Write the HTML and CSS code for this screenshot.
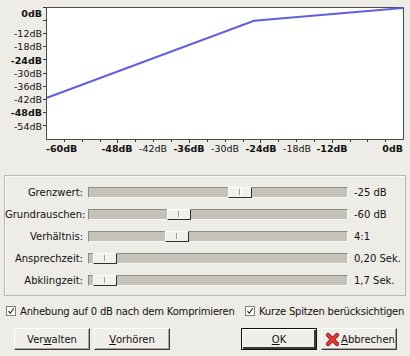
FILE: index.html
```html
<!DOCTYPE html>
<html lang="de">
<head>
    <meta charset="UTF-8">
    <title>Kompressor</title>
    <link rel="stylesheet" href="styles.css">
</head>
<body>
    <div class="dialog">
        <!-- Transfer curve -->
        <div class="graph">
            <svg width="410" height="168" viewBox="0 0 410 168">
                <rect x="46.5" y="7.5" width="357" height="132" fill="#ffffff" stroke="#4a4a4a"/>
                <g stroke="#3a3a3a" stroke-width="1">
                    <line x1="43" y1="7.5" x2="46" y2="7.5"/>
                    <line x1="43" y1="20.5" x2="46" y2="20.5"/>
                    <line x1="43" y1="33.5" x2="46" y2="33.5"/>
                    <line x1="43" y1="46.5" x2="46" y2="46.5"/>
                    <line x1="43" y1="59.5" x2="46" y2="59.5"/>
                    <line x1="43" y1="73.5" x2="46" y2="73.5"/>
                    <line x1="43" y1="86.5" x2="46" y2="86.5"/>
                    <line x1="43" y1="99.5" x2="46" y2="99.5"/>
                    <line x1="43" y1="112.5" x2="46" y2="112.5"/>
                    <line x1="43" y1="125.5" x2="46" y2="125.5"/>
                    <line x1="64.5" y1="140" x2="64.5" y2="142"/>
                    <line x1="82.5" y1="140" x2="82.5" y2="142"/>
                    <line x1="100.5" y1="140" x2="100.5" y2="142"/>
                    <line x1="117.5" y1="140" x2="117.5" y2="143"/>
                    <line x1="135.5" y1="140" x2="135.5" y2="142"/>
                    <line x1="153.5" y1="140" x2="153.5" y2="142"/>
                    <line x1="171.5" y1="140" x2="171.5" y2="142"/>
                    <line x1="189.5" y1="140" x2="189.5" y2="143"/>
                    <line x1="207.5" y1="140" x2="207.5" y2="142"/>
                    <line x1="225.5" y1="140" x2="225.5" y2="142"/>
                    <line x1="243.5" y1="140" x2="243.5" y2="142"/>
                    <line x1="260.5" y1="140" x2="260.5" y2="143"/>
                    <line x1="278.5" y1="140" x2="278.5" y2="142"/>
                    <line x1="296.5" y1="140" x2="296.5" y2="142"/>
                    <line x1="314.5" y1="140" x2="314.5" y2="142"/>
                    <line x1="332.5" y1="140" x2="332.5" y2="143"/>
                    <line x1="350.5" y1="140" x2="350.5" y2="142"/>
                    <line x1="367.5" y1="140" x2="367.5" y2="142"/>
                    <line x1="385.5" y1="140" x2="385.5" y2="142"/>
                </g>
                <polyline points="47,97.8 254,20.8 403,8" fill="none" stroke="#5f5fe0" stroke-width="2"/>

                <g class="axis-y">
                    <text x="42" y="16.5" class="major">0dB</text>
                    <text x="42" y="37">-12dB</text>
                    <text x="42" y="50">-18dB</text>
                    <text x="42" y="63.5" class="major">-24dB</text>
                    <text x="42" y="76.5">-30dB</text>
                    <text x="42" y="89.5">-36dB</text>
                    <text x="42" y="103">-42dB</text>
                    <text x="42" y="116" class="major">-48dB</text>
                    <text x="42" y="129.5">-54dB</text>
                </g>
                <g class="axis-x">
                    <text x="46" y="152" class="major start">-60dB</text>
                    <text x="117" y="152" class="major">-48dB</text>
                    <text x="153" y="152">-42dB</text>
                    <text x="189" y="152" class="major">-36dB</text>
                    <text x="225" y="152">-30dB</text>
                    <text x="261" y="152" class="major">-24dB</text>
                    <text x="297" y="152">-18dB</text>
                    <text x="332" y="152" class="major">-12dB</text>
                    <text x="403" y="152" class="major end">0dB</text>
                </g>
            </svg>
        </div>

        <!-- Slider settings -->
        <div class="settings">
            <div class="row">
                <span class="label">Grenzwert:</span>
                <div class="track"><span class="thumb" style="left: 139px"></span></div>
                <span class="value">-25 dB</span>
            </div>
            <div class="row">
                <span class="label">Grundrauschen:</span>
                <div class="track"><span class="thumb" style="left: 78px"></span></div>
                <span class="value">-60 dB</span>
            </div>
            <div class="row">
                <span class="label">Verhältnis:</span>
                <div class="track"><span class="thumb" style="left: 76px"></span></div>
                <span class="value">4:1</span>
            </div>
            <div class="row">
                <span class="label">Ansprechzeit:</span>
                <div class="track"><span class="thumb" style="left: 4px"></span></div>
                <span class="value">0,20 Sek.</span>
            </div>
            <div class="row">
                <span class="label">Abklingzeit:</span>
                <div class="track"><span class="thumb" style="left: 4px"></span></div>
                <span class="value">1,7 Sek.</span>
            </div>
        </div>

        <!-- Options -->
        <div class="options">
            <label class="check first">
                <span class="box"><svg width="8" height="8" viewBox="0 0 8 8"><path d="M1.5 4.2 L3.3 6.2 L6.8 1.2" fill="none" stroke="#222" stroke-width="1.1"/></svg></span>
                Anhebung auf 0 dB nach dem Komprimieren
            </label>
            <label class="check">
                <span class="box"><svg width="8" height="8" viewBox="0 0 8 8"><path d="M1.5 4.2 L3.3 6.2 L6.8 1.2" fill="none" stroke="#222" stroke-width="1.1"/></svg></span>
                Kurze Spitzen berücksichtigen
            </label>
        </div>

        <!-- Buttons -->
        <div class="actions">
            <div class="group">
                <button>Ver<u>w</u>alten</button>
                <button><u>V</u>orhören</button>
            </div>
            <div class="group">
                <button class="default"><u>O</u>K</button>
                <button class="cancel">
                    <svg width="15" height="15" viewBox="0 0 15 15">
                        <path d="M3 3 L12 12 M12 3 L3 12" stroke="#8a1010" stroke-width="4.2" stroke-linecap="round"/>
                        <path d="M3 3 L12 12 M12 3 L3 12" stroke="#e43a3a" stroke-width="2.6" stroke-linecap="round"/>
                    </svg>
                    <span><u>A</u>bbrechen</span>
                </button>
            </div>
        </div>
    </div>
</body>
</html>
```
FILE: styles.css
```css
/* Dialog base */
body {
    margin: 0;
    background-color: #edece7;
    font-family: 'DejaVu Sans', sans-serif;
    font-size: 10px;
    color: #111;
}

.dialog {
    width: 410px;
    height: 356px;
    display: flex;
    flex-direction: column;
}

/* Graph */
.graph {
    height: 168px;
}

.graph svg {
    display: block;
}

.graph text {
    font-family: 'DejaVu Sans', sans-serif;
    font-size: 9.5px;
    fill: #111;
}

.graph text.major {
    font-weight: bold;
}

.axis-y text {
    text-anchor: end;
}

.axis-x text {
    text-anchor: middle;
}

.axis-x text.start {
    text-anchor: start;
}

.axis-x text.end {
    text-anchor: end;
}

/* Group of sliders */
.settings {
    margin: 7px 4px 0 4px;
    padding: 5px 0 4px 0;
    border: 1px solid #bcb8af;
    box-shadow: inset 1px 1px 0 #fbfaf7;
    display: flex;
    flex-direction: column;
}

.row {
    height: 22px;
    display: grid;
    grid-template-columns: 78px 260px auto;
    column-gap: 5px;
    align-items: center;
}

.label {
    text-align: right;
}

.value {
    padding-left: 1px;
}

.track {
    position: relative;
    height: 11px;
    box-sizing: border-box;
    background-color: #c5c2ba;
    border: 1px solid;
    border-color: #8f8c84 #f7f6f2 #f7f6f2 #8f8c84;
}

.thumb {
    position: absolute;
    top: -1px;
    width: 24px;
    height: 11px;
    box-sizing: border-box;
    background-color: #f1f0ec;
    border: 1px solid;
    border-color: #fdfdfc #2f2f2f #2f2f2f #fdfdfc;
}

.thumb::after {
    content: '';
    position: absolute;
    left: 10px;
    top: 1px;
    width: 1px;
    height: 6px;
    background-color: #9c998f;
    box-shadow: 1px 0 0 #ffffff;
}

/* Checkboxes */
.options {
    display: flex;
    align-items: center;
    height: 16px;
    margin-top: 7px;
    padding-left: 6px;
    white-space: nowrap;
}

.check {
    display: flex;
    align-items: center;
    gap: 4px;
    letter-spacing: -0.2px;
}

.check.first {
    width: 239px;
    flex: none;
}

.box {
    flex: none;
    width: 10px;
    height: 10px;
    box-sizing: border-box;
    border: 1px solid #85827a;
    background-color: #fafaf8;
    display: flex;
    align-items: center;
    justify-content: center;
}

.box svg {
    display: block;
}

/* Buttons */
.actions {
    display: flex;
    justify-content: space-between;
    margin-top: 9px;
    padding: 0 13px 0 14px;
}

.group {
    display: flex;
    gap: 4px;
}

button {
    width: 76px;
    height: 22px;
    padding: 0;
    font-family: 'DejaVu Sans', sans-serif;
    font-size: 10px;
    color: #111;
    background-color: #efeee9;
    border: 1px solid;
    border-color: #fdfdfb #3a3a3a #3a3a3a #fdfdfb;
    box-shadow: inset -1px -1px 0 #a8a59d;
    display: flex;
    align-items: center;
    justify-content: center;
}

button.default {
    border-color: #111;
    box-shadow: inset 1px 1px 0 #fdfdfb, inset -2px -2px 0 #3a3a3a;
}

button.cancel {
    gap: 1px;
    padding-left: 2px;
}

button.cancel svg {
    display: block;
}
```
